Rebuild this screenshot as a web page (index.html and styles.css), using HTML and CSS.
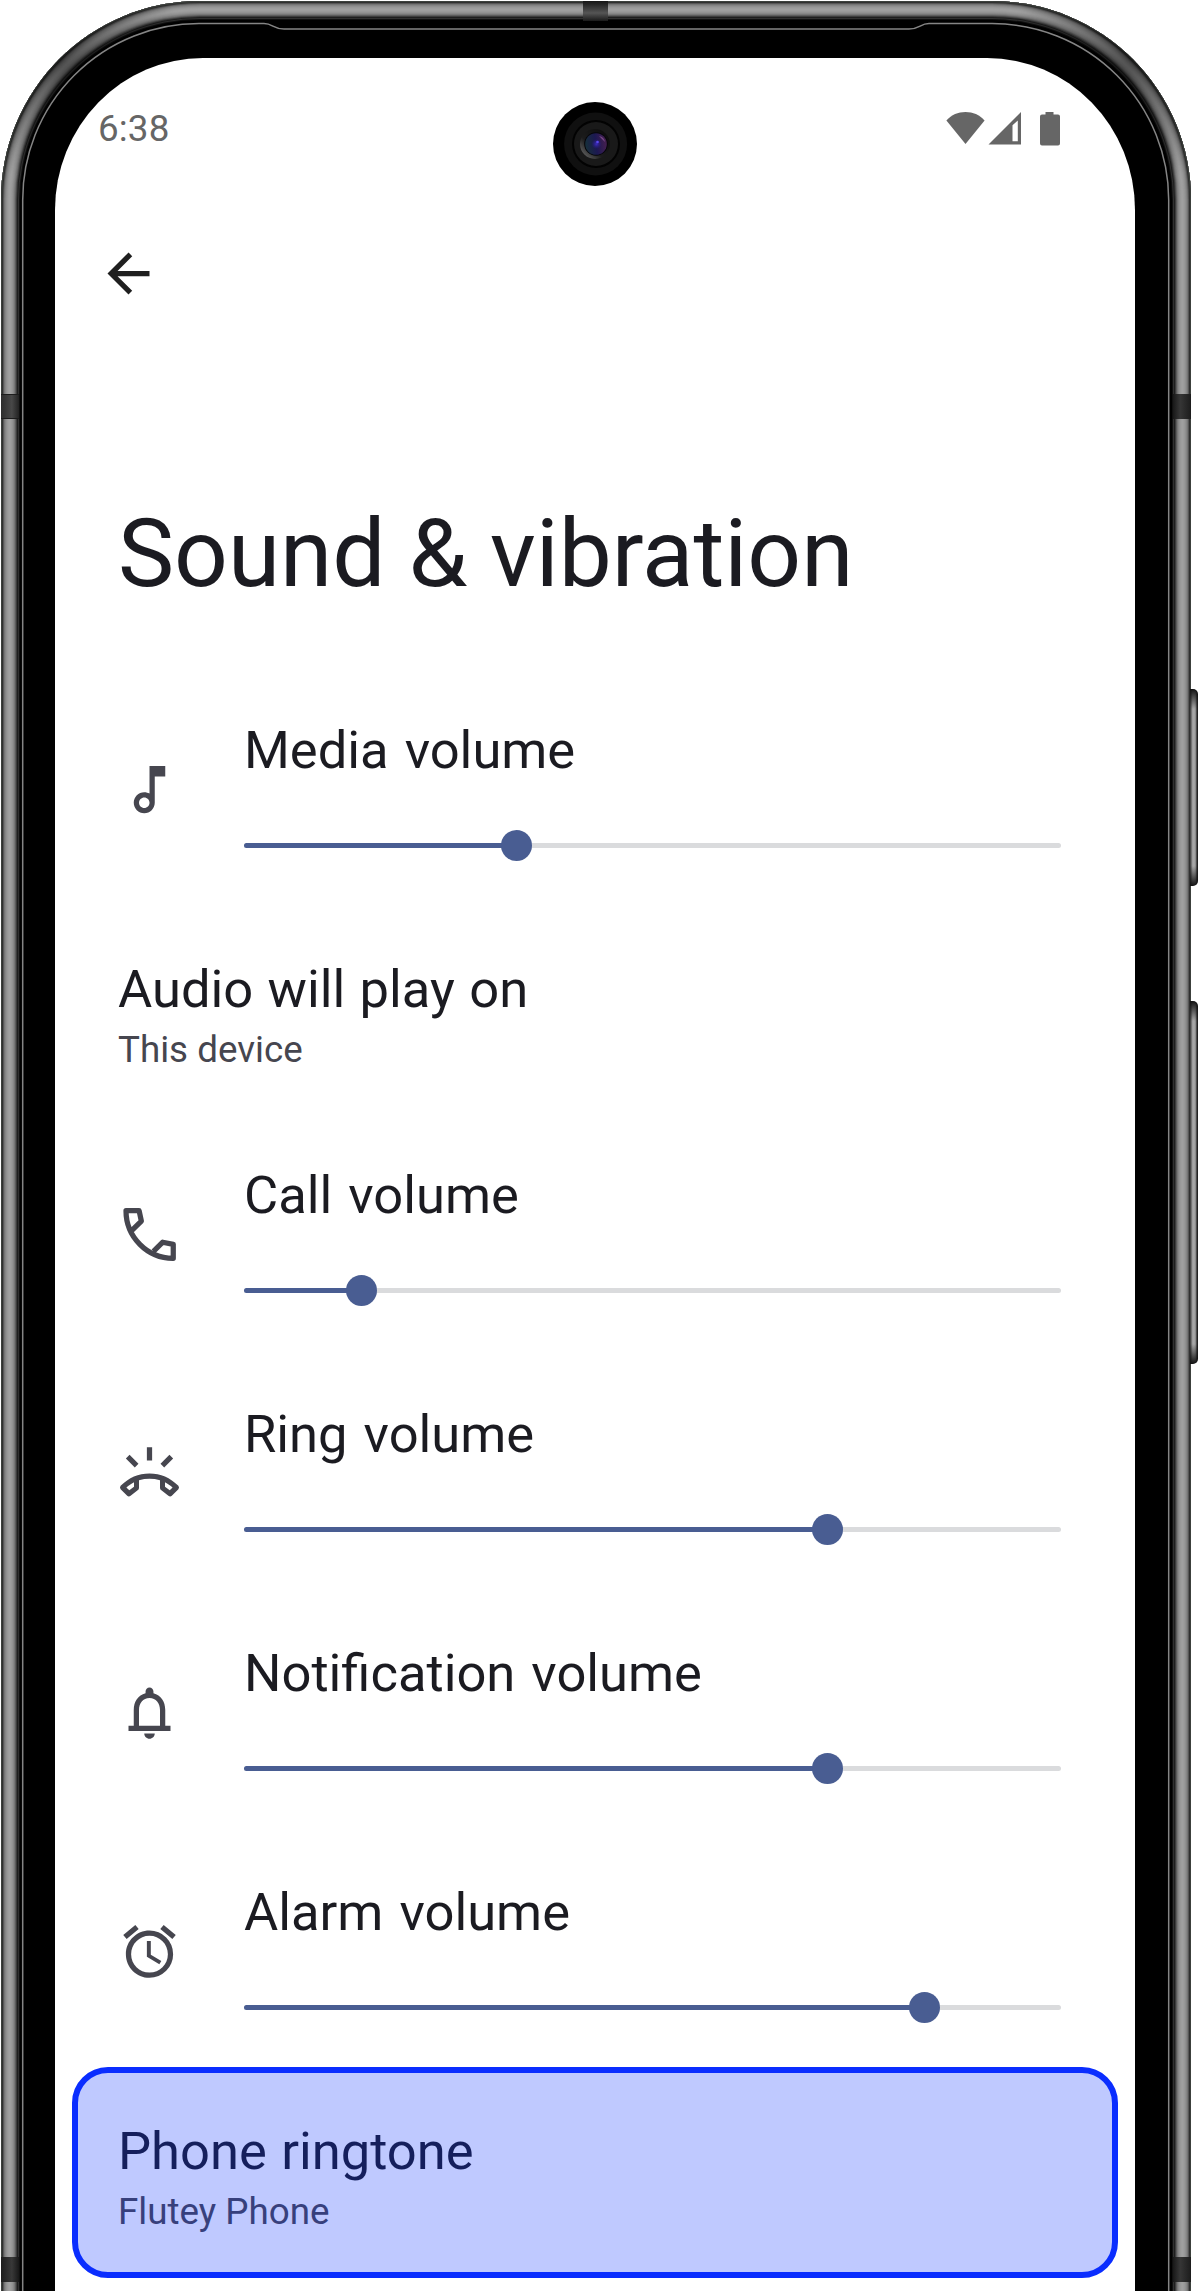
FILE: index.html
```html
<!DOCTYPE html>
<html lang="en">
<head>
<meta charset="utf-8">
<title>Sound &amp; vibration</title>
<link rel="stylesheet" href="styles.css">
</head>
<body>
<div class="stage">
  <span class="side-button side-button-power"></span>
  <span class="side-button side-button-volume"></span>
  <div class="phone">
    <span class="band band-top"></span>
    <span class="band band-left"></span>
    <span class="band band-right"></span>
    <span class="band band-left-low"></span>
    <span class="band band-right-low"></span>
    <svg class="seam" viewBox="0 0 1198 2291" aria-hidden="true">
      <path d="M22.7 2291V200A176.3 176.3 0 0 1 199 23.6H264C273 23.6 273 29 284 29H909C920 29 920 23.6 929 23.6H992A176.7 176.7 0 0 1 1168.7 200V2291"/>
    </svg>
    <main class="screen">
      <header class="status-bar">
        <span class="clock">6:38</span>
        <svg class="status-icons" width="116" height="36" viewBox="0 0 116 36" aria-hidden="true">
          <path d="M.4 9.4C5.6 3.6 12 .9 19.5.9S33.4 3.6 38.600 9.400L19.500 33Z"/>
          <path fill-rule="evenodd" d="M42.500 33.500L75 1V33.500ZM66.500 30.200H71.800V9.500L66.500 14.300Z"/>
          <path d="M99.500 1h8v2.600H112a2 2 0 0 1 2 2V32.500a2 2 0 0 1-2 2H96a2 2 0 0 1-2-2V5.600a2 2 0 0 1 2-2h3.500Z"/>
        </svg>
      </header>
      <nav class="toolbar">
        <svg class="back" viewBox="0 0 24 24" aria-label="Back"><path d="M20 11H7.830l5.590-5.590L12 4l-8 8 8 8 1.410-1.410L7.830 13H20z"/></svg>
      </nav>
      <h1 class="title">Sound &amp; vibration</h1>

      <section class="row volume">
        <svg class="icon" viewBox="0 0 24 24"><path d="M12 3l.01 10.550c-.59-.34-1.270-.55-2-.55C7.790 13 6 14.790 6 17s1.790 4 4.010 4S14 19.210 14 17V7h4V3zM10.010 19c-1.100 0-2-.9-2-2s.9-2 2-2 2 .9 2 2-.9 2-2 2z"/></svg>
        <div class="control">
          <div class="label">Media volume</div>
          <div class="track"><span class="fill" style="width:272.500px"></span></div>
        </div>
      </section>

      <section class="row">
        <div class="label">Audio will play on</div>
        <div class="summary">This device</div>
      </section>

      <section class="row volume">
        <svg class="icon line" viewBox="0 0 24 24"><path d="M5.200 10.500L8.900 6.900L8.050 2.950H3.050C3.050 12.900 11.100 21.100 21.050 21.050V15.750L17.050 14.950L13.500 18.450"/></svg>
        <div class="control">
          <div class="label">Call volume</div>
          <div class="track"><span class="fill" style="width:117.500px"></span></div>
        </div>
      </section>

      <section class="row volume">
        <svg class="icon" viewBox="0 0 24 24">
          <path d="M11 2h2v5h-2zM3 6.300L4.400 4.900L7.800 8.300L6.400 9.700ZM21 6.300L19.600 4.900L16.200 8.300L17.600 9.700Z"/>
          <path fill-rule="evenodd" d="M1 16.700C4.200 13.600 7.700 12 12 12s7.800 1.600 11 4.700q.5.600 0 1.300l-2.500 2.500q-.6.500-1.300 0l-2.800-2.200q-.4-.3-.4-.9V14.600C13.300 13.850 10.700 13.850 8 14.600V17.400q0 .6-.4.900l-2.800 2.200q-.7.500-1.300 0L1 18q-.5-.7 0-1.300ZM6.100 15.300C5 15.850 4.100 16.500 3.200 17.300L4.300 18.400L6.100 17ZM17.900 15.300C19 15.850 19.900 16.500 20.800 17.300L19.700 18.400L17.900 17Z"/>
        </svg>
        <div class="control">
          <div class="label">Ring volume</div>
          <div class="track"><span class="fill" style="width:583px"></span></div>
        </div>
      </section>

      <section class="row volume">
        <svg class="icon" viewBox="0 0 24 24"><path fill-rule="evenodd" d="M18 17v-6c0-3.070-1.630-5.640-4.500-6.320V4c0-.83-.67-1.500-1.500-1.500s-1.500.67-1.500 1.500v.68C7.640 5.360 6 7.920 6 11v6H4v2h16v-2zM16 17H8v-6c0-2.480 1.510-4.500 4-4.500s4 2.020 4 4.500zM12 22c1.100 0 2-.9 2-2h-4c0 1.100.9 2 2 2z"/></svg>
        <div class="control">
          <div class="label">Notification volume</div>
          <div class="track"><span class="fill" style="width:583px"></span></div>
        </div>
      </section>

      <section class="row volume">
        <svg class="icon" viewBox="0 0 24 24"><path d="M22 5.720l-4.600-3.860-1.290 1.530 4.600 3.860zM7.880 3.390L6.600 1.860 2 5.710l1.290 1.530zM12.500 8H11v6l4.750 2.850.75-1.230-4-2.370zM12 4c-4.970 0-9 4.030-9 9s4.020 9 9 9a9 9 0 0 0 0-18zm0 16c-3.870 0-7-3.130-7-7s3.130-7 7-7 7 3.130 7 7-3.130 7-7 7z"/></svg>
        <div class="control">
          <div class="label">Alarm volume</div>
          <div class="track"><span class="fill" style="width:680px"></span></div>
        </div>
      </section>

      <section class="row selected">
        <div class="label">Phone ringtone</div>
        <div class="summary">Flutey Phone</div>
      </section>
    </main>
    <svg class="camera" viewBox="-42 -42 84 84" aria-hidden="true">
      <defs>
        <linearGradient id="rim" x1="1" y1="0" x2="0" y2="1">
          <stop offset="0" stop-color="#080808"/><stop offset=".6" stop-color="#1c1c1c"/><stop offset="1" stop-color="#777"/>
        </linearGradient>
        <linearGradient id="lens" x1="0" y1=".5" x2="1" y2=".35">
          <stop offset="0" stop-color="#16303a"/><stop offset=".5" stop-color="#1c1852"/><stop offset="1" stop-color="#48204f"/>
        </linearGradient>
        <radialGradient id="glow"><stop offset="0" stop-color="#3c2cc0"/><stop offset="1" stop-color="#2a1c90" stop-opacity="0"/></radialGradient>
      </defs>
      <circle r="42" fill="#000"/>
      <circle cx=".6" r="31.500" fill="#101010"/>
      <circle cx="1" r="24" fill="#020202"/>
      <circle cx="1" r="22" fill="#191919"/>
      <circle cx="0" r="15" fill="url(#rim)"/>
      <circle cx="1" r="11.800" fill="#05050a"/>
      <circle cx="1" r="10.800" fill="url(#lens)"/>
      <circle cx="1.500" cy="0" r="5" fill="url(#glow)"/>
      <circle cx="2.500" cy="-2" r="1.300" fill="#5a48f0"/>
      <path d="M4-8Q9-7 10-2Q7-5 4-8Z" fill="#7a4a88"/>
    </svg>
  </div>
</div>
</body>
</html>
```
FILE: styles.css
```css
*, *::before, *::after { box-sizing: border-box; }

body {
  margin: 0;
  background: #fff;
  font-family: Roboto, "Liberation Sans", sans-serif;
  color: #1b1b21;
}

.stage {
  position: relative;
  width: 1198px;
  height: 2291px;
  overflow: hidden;
  padding: 1px 0 0 1px;
}

/* Phone body: concentric rings shade the rounded metal rail. */
.phone {
  width: 1190px;
  height: 2490px;
  padding: 57px 55px 0 54px;
  border-radius: 199px;
  background: #000;
  box-shadow:
    inset 0 0 0 1px #3c403c,
    inset 0 0 0 2px #303030,
    inset 0 0 0 3px #565656,
    inset 0 0 0 4px #757575,
    inset 0 0 0 5px #858585,
    inset 0 0 0 6px #909090,
    inset 0 0 0 7px #989898,
    inset 0 0 0 8px #9d9d9d,
    inset 0 0 0 9px #a0a0a0,
    inset 0 0 0 10px #9e9e9e,
    inset 0 0 0 11px #999999,
    inset 0 0 0 12px #929292,
    inset 0 0 0 13px #878787,
    inset 0 0 0 14px #767676,
    inset 0 0 0 15px #5c5c5c,
    inset 0 0 0 16px #3c3c3c,
    inset 0 0 0 17px #1e1e1e,
    inset 0 0 0 18px #303030,
    inset 0 0 0 19px #101010;
}

/* The rail catches less light round the corners. */
.phone::before {
  content: "";
  position: absolute;
  inset: 1px 7px 0 1px;
  border-radius: 199px 199px 0 0;
  background:
    radial-gradient(circle at 58px 58px, rgba(0, 0, 0, .5), transparent 125px),
    radial-gradient(circle at 1132px 58px, rgba(0, 0, 0, .5), transparent 125px);
}

.seam {
  position: absolute;
  inset: 0;
  width: 1198px;
  height: 2291px;
  fill: none;
  stroke: #858585;
  stroke-width: 1.500;
}

.band { position: absolute; background: linear-gradient(90deg, #2c2c2c, #484848 60%, #222); }
.band-top { left: 583px; top: 1px; width: 25px; height: 20px; background: linear-gradient(#151515, #555 60%, #1a1a1a); }
.band-left { left: 1px; top: 394px; width: 18px; height: 25px; border: solid #1c1c1c; border-width: 1px 0; }
.band-right { left: 1173px; top: 394px; width: 18px; height: 25px; background: linear-gradient(90deg, #181818, #363636 40%, #1c1c1c); }
.band-left-low { left: 1px; top: 2257px; width: 18px; height: 25px; background: linear-gradient(90deg, #1c1c1c, #383838 60%, #181818); }
.band-right-low { left: 1173px; top: 2257px; width: 18px; height: 25px; background: linear-gradient(90deg, #181818, #363636 40%, #1c1c1c); }

.side-button {
  position: absolute;
  left: 1190px;
  width: 8px;
  border-radius: 0 5px 5px 0;
  background:
    linear-gradient(#111, transparent 20px, transparent calc(100% - 20px), #111),
    linear-gradient(90deg, #333, #aaa 35%, #a0a0a0 65%, #222 90%);
}
.side-button-power { top: 689px; height: 197px; }
.side-button-volume { top: 1001px; height: 363px; }

.screen {
  position: relative;
  width: 1080px;
  height: 2233px;
  border-radius: 148px 148px 0 0 / 152px 152px 0 0;
  background: #fff;
  overflow: hidden;
}

.status-bar {
  display: flex;
  justify-content: space-between;
  height: 142px;
  padding: 49px 73px 0 43px;
  color: #666;
}
.clock { font-size: 36.750px; line-height: 43px; letter-spacing: .15px; }
.status-icons { margin-top: 4px; fill: #666; }

.toolbar { height: 299px; padding: 42px 0 0 42px; }
.back { display: block; width: 63px; height: 63px; fill: #1f1f1f; }

.title {
  height: 189px;
  margin: 0;
  padding-left: 63px;
  font-size: 94.500px;
  line-height: 110px;
  font-weight: 400;
  word-spacing: -.6px;
}

.row { position: relative; height: 206px; padding: 31px 74px 0 63px; }
.volume { display: flex; gap: 63px; height: 239px; }
.icon { flex: none; width: 63px; height: 63px; margin-top: 39px; fill: #46464f; }
.icon.line { fill: none; stroke: #46464f; stroke-width: 2; stroke-linejoin: round; }
.control { flex: 1; }

.label { font-size: 52.500px; line-height: 62px; white-space: nowrap; word-spacing: 1.300px; }
.volume .label { word-spacing: 3px; }
.summary { margin-top: 8px; font-size: 36.750px; line-height: 43px; color: #46464f; }

.track { height: 5px; margin-top: 62px; border-radius: 3px; background: #dadbdd; }
.fill { display: block; position: relative; height: 5px; border-radius: 3px 0 0 3px; background: #495d92; }
.fill::after {
  content: "";
  position: absolute;
  right: -15.500px;
  top: -13px;
  width: 31px;
  height: 31px;
  border-radius: 50%;
  background: #495d92;
}

.selected::before {
  content: "";
  position: absolute;
  left: 17px;
  top: -22px;
  width: 1046px;
  height: 211px;
  border: 6px solid #0a2dff;
  border-radius: 36px;
  background: #bfc9ff;
}
.selected .label { position: relative; color: #151f5c; }
.selected .summary { position: relative; color: #37407c; }

.camera { position: absolute; left: 552.700px; top: 102.300px; width: 84px; height: 84px; }
```
